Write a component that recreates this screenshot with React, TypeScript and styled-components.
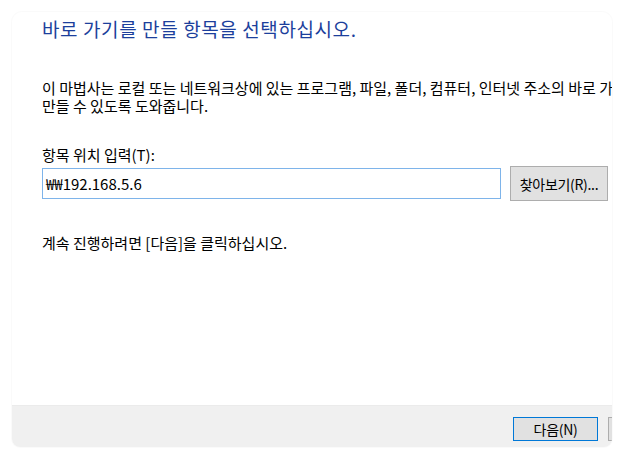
import React from "react";
import styled, { createGlobalStyle } from "styled-components";

const Global = createGlobalStyle`
  html, body { margin: 0; padding: 0; background: #ffffff; }
  body { font-family: "Noto Sans CJK KR", "Noto Sans", sans-serif; color: #000; }
  * { box-sizing: border-box; }
`;

const Page = styled.div`
  width: 624px;
  height: 458px;
  padding: 12px;
  background: #ffffff;
  overflow: hidden;
`;

const Card = styled.div`
  width: 600px;
  height: 435px;
  display: flex;
  flex-direction: column;
  border-radius: 10px 10px 8px 8px;
  box-shadow: 0 0 0 1px rgba(0, 0, 0, 0.02);
  overflow: hidden;
`;

const Content = styled.div`
  display: flex;
  flex-direction: column;
  padding: 5px 0 0 30px;
`;

const Title = styled.h1`
  margin: 0;
  font-size: 19px;
  line-height: 24px;
  letter-spacing: 0.6px;
  font-weight: 400;
  color: #1c3f9c;
  white-space: nowrap;
`;

const Text = styled.p<{ $top: number }>`
  margin: ${(p) => p.$top}px 0 0;
  font-size: 15px;
  line-height: 18px;
  white-space: nowrap;
`;

const Description = styled.p`
  margin: 38px 0 0;
  width: 570px;
  font-size: 15px;
  line-height: 18px;
  white-space: pre;
  overflow: hidden;
`;

const InputRow = styled.div`
  display: flex;
  align-items: center;
  gap: 9px;
  margin-top: 2px;
  height: 35px;
`;

const Field = styled.div`
  width: 459px;
  height: 31px;
  border: 1px solid #7eb4ea;
  background: #fff;
  font-size: 15px;
  line-height: 29px;
  padding-left: 3px;
  white-space: nowrap;
`;

const Button = styled.div<{ $w: number; $h: number; $default?: boolean }>`
  flex-shrink: 0;
  width: ${(p) => p.$w}px;
  height: ${(p) => p.$h}px;
  background: #e1e1e1;
  border: 1px solid ${(p) => (p.$default ? "#0078d7" : "#adadad")};
  display: flex;
  align-items: center;
  justify-content: center;
  font-size: 14px;
  letter-spacing: -0.3px;
  white-space: nowrap;
`;

const Footer = styled.div`
  margin-top: auto;
  height: 42px;
  background: #f0f0f0;
  border-top: 1px solid #ebebeb;
  display: flex;
  align-items: flex-start;
  gap: 10px;
  padding: 11px 0 0 501px;
  overflow: hidden;
`;

export default function App() {
  return (
    <>
      <Global />
      <Page>
        <Card>
          <Content>
            <Title>바로 가기를 만들 항목을 선택하십시오.</Title>
            <Description>
              {"이 마법사는 로컬 또는 네트워크상에 있는 프로그램, 파일, 폴더, 컴퓨터, 인터넷 주소의 바로 가기를\n만들 수 있도록 도와줍니다."}
            </Description>
            <Text $top={31}>항목 위치 입력(T):</Text>
            <InputRow>
              <Field>₩₩192.168.5.6</Field>
              <Button $w={98} $h={35}>찾아보기(R)...</Button>
            </InputRow>
            <Text $top={33}>계속 진행하려면 [다음]을 클릭하십시오.</Text>
          </Content>
          <Footer>
            <Button $w={85} $h={24} $default>다음(N)</Button>
            <Button $w={85} $h={24} aria-label="취소" />
          </Footer>
        </Card>
      </Page>
    </>
  );
}
